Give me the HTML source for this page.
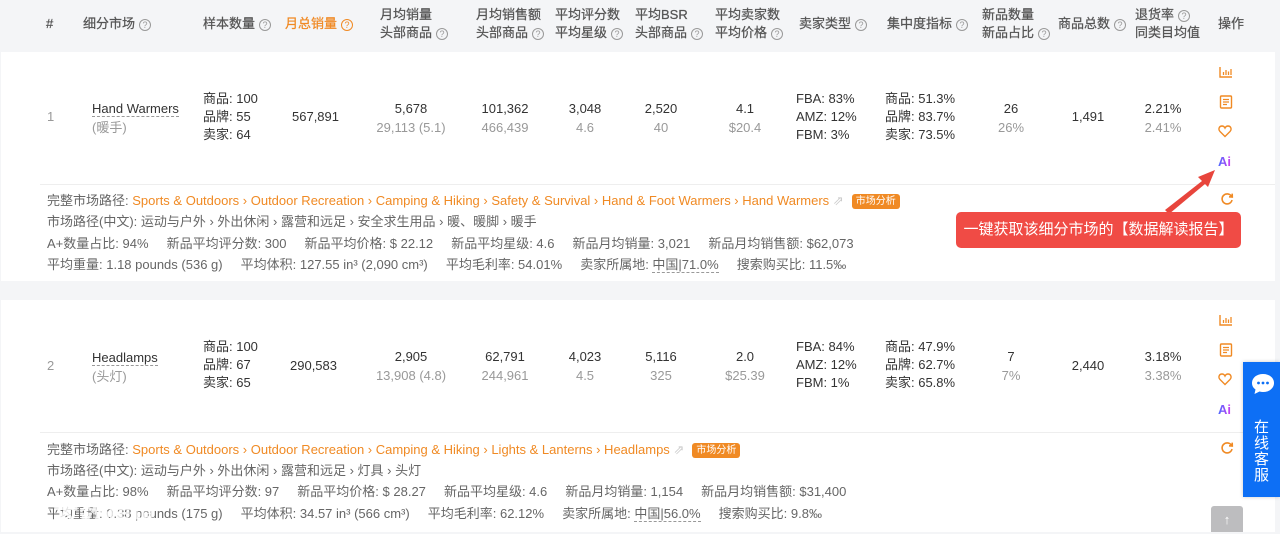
<!DOCTYPE html>
<html><head><meta charset="utf-8">
<style>
*{margin:0;padding:0;box-sizing:border-box}
body{width:1280px;height:532px;overflow:hidden;background:#f4f5f7;font-family:"Liberation Sans","Noto Sans CJK SC",sans-serif;font-size:13px;color:#333;position:relative}
.a{position:absolute;white-space:nowrap;line-height:18px}
.c{transform:translateX(-50%);text-align:center}
.h{color:#555;font-size:13px;line-height:18px;-webkit-text-stroke:0.25px #555}
.g{color:#999}
.o{color:#f08a24}
.h.o{-webkit-text-stroke:0.25px #f08a24}
.q{display:inline-block;width:12px;height:12px;border:1px solid #999;border-radius:50%;font-size:9px;line-height:10px;text-align:center;color:#999;-webkit-text-stroke:0;vertical-align:0px;margin-left:4px}
.o .q{border-color:#f08a24;color:#f08a24}
.card{position:absolute;left:1px;width:1274px;background:#fff}
.d{color:#666;font-size:13px}
.u{border-bottom:1px dashed #999}
.tag{display:inline-block;background:#f08a24;color:#fff;font-size:10px;line-height:15px;padding:0 4px;border-radius:3px;margin-left:8px;vertical-align:1px}
.hr{position:absolute;left:40px;width:1235px;height:1px;background:#eee}
</style></head><body>
<div class="card" style="top:52px;height:229px"></div>
<div class="card" style="top:300px;height:232px"></div>

<!-- header -->
<div class="a h" style="left:46px;top:15px">#</div>
<div class="a h" style="left:83px;top:15px">细分市场<span class="q">?</span></div>
<div class="a h" style="left:203px;top:15px">样本数量<span class="q">?</span></div>
<div class="a h o" style="left:285px;top:15px">月总销量<span class="q">?</span></div>
<div class="a h" style="left:380px;top:6px">月均销量<br>头部商品<span class="q">?</span></div>
<div class="a h" style="left:476px;top:6px">月均销售额<br>头部商品<span class="q">?</span></div>
<div class="a h" style="left:555px;top:6px">平均评分数<br>平均星级<span class="q">?</span></div>
<div class="a h" style="left:635px;top:6px">平均BSR<br>头部商品<span class="q">?</span></div>
<div class="a h" style="left:715px;top:6px">平均卖家数<br>平均价格<span class="q">?</span></div>
<div class="a h" style="left:799px;top:15px">卖家类型<span class="q">?</span></div>
<div class="a h" style="left:887px;top:15px">集中度指标<span class="q">?</span></div>
<div class="a h" style="left:982px;top:6px">新品数量<br>新品占比<span class="q">?</span></div>
<div class="a h" style="left:1058px;top:15px">商品总数<span class="q">?</span></div>
<div class="a h" style="left:1135px;top:6px">退货率<span class="q">?</span><br>同类目均值</div>
<div class="a h" style="left:1218px;top:15px">操作</div>

<!-- row 1 -->
<div class="a g" style="left:47px;top:108px">1</div>
<div class="a" style="left:92px;top:99px;line-height:19px"><span class="u">Hand Warmers</span><br><span class="g">(暖手)</span></div>
<div class="a" style="left:203px;top:90px">商品: 100<br>品牌: 55<br>卖家: 64</div>
<div class="a" style="left:292px;top:108px">567,891</div>
<div class="a c" style="left:411px;top:99px;line-height:19px">5,678<br><span class="g">29,113 (5.1)</span></div>
<div class="a c" style="left:505px;top:99px;line-height:19px">101,362<br><span class="g">466,439</span></div>
<div class="a c" style="left:585px;top:99px;line-height:19px">3,048<br><span class="g">4.6</span></div>
<div class="a c" style="left:661px;top:99px;line-height:19px">2,520<br><span class="g">40</span></div>
<div class="a c" style="left:745px;top:99px;line-height:19px">4.1<br><span class="g">$20.4</span></div>
<div class="a" style="left:796px;top:90px">FBA: 83%<br>AMZ: 12%<br>FBM: 3%</div>
<div class="a" style="left:885px;top:90px">商品: 51.3%<br>品牌: 83.7%<br>卖家: 73.5%</div>
<div class="a c" style="left:1011px;top:99px;line-height:19px">26<br><span class="g">26%</span></div>
<div class="a c" style="left:1088px;top:108px">1,491</div>
<div class="a c" style="left:1163px;top:99px;line-height:19px">2.21%<br><span class="g">2.41%</span></div>
<div class="hr" style="top:184px"></div>
<div class="a d" style="left:47px;top:190px;line-height:21.3px">完整市场路径: <span class="o">Sports &amp; Outdoors › Outdoor Recreation › Camping &amp; Hiking › Safety &amp; Survival › Hand &amp; Foot Warmers › Hand Warmers</span> <span style="color:#ccc">⇗</span><span class="tag">市场分析</span><br>市场路径(中文): 运动与户外 › 外出休闲 › 露营和远足 › 安全求生用品 › 暖、暖脚 › 暖手<br>A+数量占比: 94% &nbsp;&nbsp;&nbsp; 新品平均评分数: 300 &nbsp;&nbsp;&nbsp; 新品平均价格: $ 22.12 &nbsp;&nbsp;&nbsp; 新品平均星级: 4.6 &nbsp;&nbsp;&nbsp; 新品月均销量: 3,021 &nbsp;&nbsp;&nbsp; 新品月均销售额: $62,073<br>平均重量: 1.18 pounds (536 g) &nbsp;&nbsp;&nbsp; 平均体积: 127.55 in³ (2,090 cm³) &nbsp;&nbsp;&nbsp; 平均毛利率: 54.01% &nbsp;&nbsp;&nbsp; 卖家所属地: <span class="u">中国|71.0%</span> &nbsp;&nbsp;&nbsp; 搜索购买比: 11.5‰</div>

<!-- row 2 -->
<div class="a g" style="left:47px;top:357px">2</div>
<div class="a" style="left:92px;top:348px;line-height:19px"><span class="u">Headlamps</span><br><span class="g">(头灯)</span></div>
<div class="a" style="left:203px;top:338px">商品: 100<br>品牌: 67<br>卖家: 65</div>
<div class="a" style="left:290px;top:357px">290,583</div>
<div class="a c" style="left:411px;top:347px;line-height:19px">2,905<br><span class="g">13,908 (4.8)</span></div>
<div class="a c" style="left:505px;top:347px;line-height:19px">62,791<br><span class="g">244,961</span></div>
<div class="a c" style="left:585px;top:347px;line-height:19px">4,023<br><span class="g">4.5</span></div>
<div class="a c" style="left:661px;top:347px;line-height:19px">5,116<br><span class="g">325</span></div>
<div class="a c" style="left:745px;top:347px;line-height:19px">2.0<br><span class="g">$25.39</span></div>
<div class="a" style="left:796px;top:338px">FBA: 84%<br>AMZ: 12%<br>FBM: 1%</div>
<div class="a" style="left:885px;top:338px">商品: 47.9%<br>品牌: 62.7%<br>卖家: 65.8%</div>
<div class="a c" style="left:1011px;top:347px;line-height:19px">7<br><span class="g">7%</span></div>
<div class="a c" style="left:1088px;top:357px">2,440</div>
<div class="a c" style="left:1163px;top:347px;line-height:19px">3.18%<br><span class="g">3.38%</span></div>
<div class="hr" style="top:432px"></div>
<div class="a d" style="left:47px;top:439px;line-height:21.2px">完整市场路径: <span class="o">Sports &amp; Outdoors › Outdoor Recreation › Camping &amp; Hiking › Lights &amp; Lanterns › Headlamps</span> <span style="color:#ccc">⇗</span><span class="tag">市场分析</span><br>市场路径(中文): 运动与户外 › 外出休闲 › 露营和远足 › 灯具 › 头灯<br>A+数量占比: 98% &nbsp;&nbsp;&nbsp; 新品平均评分数: 97 &nbsp;&nbsp;&nbsp; 新品平均价格: $ 28.27 &nbsp;&nbsp;&nbsp; 新品平均星级: 4.6 &nbsp;&nbsp;&nbsp; 新品月均销量: 1,154 &nbsp;&nbsp;&nbsp; 新品月均销售额: $31,400<br>平均重量: 0.38 pounds (175 g) &nbsp;&nbsp;&nbsp; 平均体积: 34.57 in³ (566 cm³) &nbsp;&nbsp;&nbsp; 平均毛利率: 62.12% &nbsp;&nbsp;&nbsp; 卖家所属地: <span class="u">中国|56.0%</span> &nbsp;&nbsp;&nbsp; 搜索购买比: 9.8‰</div>
<div class="a" style="left:12px;top:498px;font-size:26px;line-height:30px;color:rgba(255,255,255,.8);font-weight:bold">ℓ°° 大数跨境</div>

<!-- action icons -->
<svg width="0" height="0" style="position:absolute"><defs>
<g id="bar"><path d="M1 1V11H13" fill="none" stroke="#f08a24" stroke-width="1.4"/><path d="M4.5 9V6M7 9V4M9.5 9V5.5M12 9V3" stroke="#f08a24" stroke-width="1.3"/></g>
<g id="doc"><rect x="1.5" y="1" width="11" height="12" rx="1" fill="none" stroke="#f08a24" stroke-width="1.4"/><path d="M4 4.5H10M4 7H10M4 9.5H8" stroke="#f08a24" stroke-width="1.2"/></g>
<g id="hrt"><path d="M7 12.5L2 7.5C0 5.5 1 2 4 2C5.5 2 6.5 3 7 4C7.5 3 8.5 2 10 2C13 2 14 5.5 12 7.5Z" fill="none" stroke="#f08a24" stroke-width="1.4"/></g>
<g id="refr"><path d="M11.5 4.5A5 5 0 1 0 12 8" fill="none" stroke="#f08a24" stroke-width="1.6"/><path d="M9 4.8L12.3 5L12.2 1.6" fill="none" stroke="#f08a24" stroke-width="1.6"/></g>
</defs></svg>
<svg style="position:absolute;left:1219px;top:66px" width="14" height="14"><use href="#bar"/></svg>
<svg style="position:absolute;left:1219px;top:95px" width="14" height="14"><use href="#doc"/></svg>
<svg style="position:absolute;left:1218px;top:124px" width="14" height="14"><use href="#hrt"/></svg>
<div class="a" style="left:1218px;top:153px;font-weight:bold;font-size:13px;background:linear-gradient(90deg,#4b6bff,#d23cf0);-webkit-background-clip:text;color:transparent">Ai</div>
<svg style="position:absolute;left:1220px;top:192px" width="14" height="14"><use href="#refr"/></svg>
<svg style="position:absolute;left:1219px;top:314px" width="14" height="14"><use href="#bar"/></svg>
<svg style="position:absolute;left:1219px;top:343px" width="14" height="14"><use href="#doc"/></svg>
<svg style="position:absolute;left:1218px;top:372px" width="14" height="14"><use href="#hrt"/></svg>
<div class="a" style="left:1218px;top:401px;font-weight:bold;font-size:13px;background:linear-gradient(90deg,#4b6bff,#d23cf0);-webkit-background-clip:text;color:transparent">Ai</div>
<svg style="position:absolute;left:1220px;top:441px" width="14" height="14"><use href="#refr"/></svg>

<!-- callout -->
<svg style="position:absolute;left:1155px;top:165px" width="65" height="55"><path d="M10 45L47 16L43 12L60 5L53 22L50 19L14 49Z" fill="#e8453c"/></svg>
<div class="a" style="left:956px;top:212px;width:285px;height:36px;background:#f04b45;color:#fff;border-radius:5px;font-size:15px;line-height:36px;text-align:center">一键获取该细分市场的【数据解读报告】</div>

<!-- chat widget -->
<div class="a" style="left:1243px;top:362px;width:37px;height:135px;background:#0d6ff5;box-shadow:0 0 4px rgba(0,0,0,.2)"></div>
<svg style="position:absolute;left:1251px;top:373px" width="24" height="22"><path d="M12 1C5.5 1 1 5 1 10C1 13 2.5 15 4.5 16.5L3.5 21L8.5 18.5C9.6 18.8 10.8 19 12 19C18.5 19 23 15 23 10C23 5 18.5 1 12 1Z" fill="#fff"/><circle cx="7.5" cy="10" r="1.4" fill="#0d6ff5"/><circle cx="12" cy="10" r="1.4" fill="#0d6ff5"/><circle cx="16.5" cy="10" r="1.4" fill="#0d6ff5"/></svg>
<div class="a" style="left:1254px;top:420px;color:#fff;font-size:15px;line-height:16px;white-space:normal;width:16px">在线客服</div>
<div class="a" style="left:1211px;top:506px;width:32px;height:26px;background:#bdbdbf;border-radius:3px 3px 0 0;color:#fff;text-align:center;line-height:28px;font-size:13px;font-weight:bold">↑</div>
</body></html>
